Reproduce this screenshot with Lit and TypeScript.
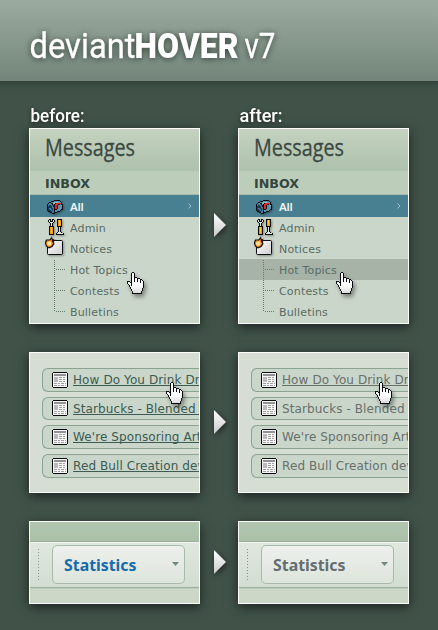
import { LitElement, html, svg, css } from "lit";
import { customElement, property } from "lit/decorators.js";
import { classMap } from "lit/directives/class-map.js";

const HAND = [
  ".....kk..........",
  "....kwwk.........",
  "....kwwk.........",
  "....kwwk.........",
  "....kwwk.........",
  "....kwwkkk.......",
  "....kwwkwwkkk....",
  "....kwwkwwkwwkk..",
  "....kwwkwwkwwkwk.",
  "kkk.kwwkwwkwwkwwk",
  "kwwkkwwwwwwwwkwwk",
  "kwwwkwwwwwwwwwwwk",
  ".kwwkwwwwwwwwwwwk",
  "..kwkwwwwwwwwwwwk",
  "..kwwwwwwwwwwwwwk",
  "...kwwwwwwwwwwwwk",
  "...kwwwwwwwwwwwk.",
  "....kwwwwwwwwwwk.",
  "....kwwwwwwwwwwk.",
  ".....kwwwwwwwwk..",
  ".....kwwwwwwwwk..",
  ".....kkkkkkkkkk..",
];

const TOOLS = [
  ".kk.kk...kkkkk..",
  "ksk.ksk..koyok..",
  "kskkksk..koyok..",
  ".ksssk...koyok..",
  "..ksk....koyok..",
  "..ksk....koyok..",
  "..ksk....koook..",
  ".kkkkk...kkkkk..",
  ".koyok....ksk...",
  ".koyok....ksk...",
  ".koyok....ksk...",
  ".koyok....ksk...",
  ".koyok....ksk...",
  ".koyok...ksssk..",
  ".koook..kssssssk",
  ".kkkkk..kkkkkkkk",
];

const MAILBOX = [
  ".......kkkkkk...",
  "....kkkttttttk..",
  "..kktttlllltttk.",
  ".kttkkllkrrrrrk.",
  "kbbbbktkrrrkktkk",
  "kbddbbkkrrktttlk",
  "kddddbkkrrkttttk",
  "kddddbbkrrkttttk",
  "kdbbddbkrrkttttk",
  "kddbbdbkkkttttkk",
  "kdddbdbktttttk..",
  ".kkddbbkttkkk...",
  "...kkbbkkk......",
  ".....kkk........",
];

const INKS: Record<string, string> = {
  k: "#090c10", w: "#ffffff", s: "#e4e6e1", o: "#f29a12", y: "#ffc62e",
  t: "#5f93a9", l: "#93bac6", b: "#427f9e", d: "#193a56", r: "#e8291e",
};

function pixels(map: string[]) {
  const runs: unknown[] = [];
  map.forEach((row, y) => {
    for (let x = 0; x < row.length; ) {
      const c = row[x];
      let n = 1;
      while (row[x + n] === c) n++;
      if (c !== ".") runs.push(svg`<rect x=${x} y=${y} width=${n} height="1" fill=${INKS[c]}></rect>`);
      x += n;
    }
  });
  return runs;
}

@customElement("hand-cursor")
class HandCursor extends LitElement {
  static styles = css`
    :host { display: block; width: 17px; height: 22px; }
    svg { display: block; overflow: visible; filter: drop-shadow(2px 3px 2px rgba(0, 0, 0, 0.4)); }
    .pix { shape-rendering: crispEdges; }
  `;
  render() {
    return html`<svg width="17" height="22">
      <defs><linearGradient id="shade" x1="0" y1="0" x2="0" y2="1">
        <stop offset=".3" stop-color="#999" stop-opacity="0"></stop>
        <stop offset="1" stop-color="#999" stop-opacity=".35"></stop>
      </linearGradient></defs>
      <g class="pix">${pixels(HAND)}</g>
      <path d="M5 10h11v6l-2 5h-8l-4-7z" fill="url(#shade)"></path>
    </svg>`;
  }
}

@customElement("messages-panel")
class MessagesPanel extends LitElement {
  @property({ type: Boolean }) hovered = false;
  static styles = css`
    :host { display: block; position: relative; height: 194px; background: #cbd6ca; font: 11px "DejaVu Sans", sans-serif; color: #576c64; }
    .head { height: 42px; background: linear-gradient(#c5d2c0, #adc1ac); }
    .head svg, .label svg { display: block; }
    .label { height: 24px; box-sizing: border-box; background: #bccdba; border-bottom: 1px solid #a7b9a7; }
    .label svg { height: 23px; }
    .row { height: 21px; line-height: 21px; display: flex; align-items: center; }
    .icon { width: 40px; height: 21px; flex: none; }
    .icon svg { display: block; overflow: visible; filter: drop-shadow(1px 1px 1px rgba(0, 0, 0, 0.35)); }
    .pix { shape-rendering: crispEdges; }
    .txt { flex: 1; padding-top: 2px; letter-spacing: 0.17px; }
    .all { height: 22px; background: #488092; color: #eef5f3; }
    .all .txt { font: 600 11.5px/20px "Noto Sans", sans-serif; letter-spacing: -0.2px; }
    .chev { margin-right: 7px; }
    .hot { background: #a7b3a7; }
    .branch { width: 40px; flex: none; height: 21px; }
    .branch svg { display: block; }
    hand-cursor { position: absolute; left: 97px; top: 143px; }
  `;
  render() {
    return html`
      <div class="head"><svg width="169" height="42">
        <text x="15" y="27" font-family="Open Sans" font-size="23.5" fill="#3b4842" stroke="#3b4842" stroke-width=".3" textLength="90" lengthAdjust="spacingAndGlyphs">Messages</text>
      </svg></div>
      <div class="label"><svg width="169" height="23">
        <text x="15" y="17" font-family="DejaVu Sans" font-weight="700" font-size="12.5" fill="#34463f" textLength="45" lengthAdjust="spacingAndGlyphs">INBOX</text>
      </svg></div>
      <div class="row all">
        <span class="icon"><svg width="40" height="21"><g class="pix" transform="translate(17 4)">${pixels(MAILBOX)}</g></svg></span>
        <span class="txt">All</span>
        <svg class="chev" width="4" height="6"><path d="M.5.5 3 3 .5 5.5" fill="none" stroke="#9cc0c8"></path></svg>
      </div>
      <div class="row">
        <span class="icon"><svg width="40" height="21"><g class="pix" transform="translate(18 2)">${pixels(TOOLS)}</g></svg></span>
        <span class="txt">Admin</span>
      </div>
      <div class="row">
        <span class="icon"><svg width="40" height="21">
          <defs><linearGradient id="paper" x1="0" y1="0" x2="1" y2="1"><stop stop-color="#fff"></stop><stop offset="1" stop-color="#cfcfcf"></stop></linearGradient></defs>
          <rect x="17.5" y="2.5" width="15" height="14" rx="1" fill="url(#paper)" stroke="#0c0f12"></rect>
          <path d="M16 1.500 19.500 1.500 22-1.500 22.500 1 24.500 1.500 24 4 24.500 6 22.500 9 19 10.500 16 8.500 14.800 5z" fill="#1b1108"></path>
          <path d="M17 2.500 20 2.500 21.800 1 22 3.500 23.200 5.500 21.500 8 19 9.300 16.800 7.700 16 5z" fill="#f58a18"></path>
          <circle cx="19.300" cy="5.500" r="2.200" fill="#ffe49c"></circle>
        </svg></span>
        <span class="txt">Notices</span>
      </div>
      ${["Hot Topics", "Contests", "Bulletins"].map((t, i) => html`
        <div class=${classMap({ row: true, hot: this.hovered && i === 0 })}>
          <span class="branch"><svg width="40" height="21">
            <path d=${`M24.500 ${i % 2 ? 0 : 1}V${i === 2 ? 11 : 21}M26 10.500h9`} stroke="#667b6f" stroke-dasharray="1 1" shape-rendering="crispEdges" fill="none"></path>
          </svg></span>
          <span class="txt">${t}</span>
        </div>`)}
      <hand-cursor></hand-cursor>`;
  }
}

@customElement("links-panel")
class LinksPanel extends LitElement {
  @property({ type: Boolean }) hovered = false;
  static styles = css`
    :host { display: block; position: relative; height: 139px; overflow: hidden; background: #d6ddd2; }
    .list { display: grid; grid-template-rows: 24px 23px 24px 24px; row-gap: 5px; padding: 15px 0 0 12px; }
    .item { display: flex; box-sizing: border-box; border: 1px solid #8ba391; border-right: 0; border-radius: 6px 0 0 6px; background: #cad6ca; padding: 3px 0 0 9px; gap: 5px; min-width: 0; }
    .item svg { flex: none; display: block; }
    .short { padding-top: 2px; }
    .short .txt { margin-top: 1px; }
    .txt { flex: 1; min-width: 0; box-sizing: border-box; height: 14px; font: 12px/17px "DejaVu Sans", sans-serif; letter-spacing: 0.1px; white-space: nowrap; color: #3c5b52; border-bottom: 1px solid #3c5b52; }
    .gray { color: #68706c; border-bottom-color: #68706c; }
    .plain { border-bottom-color: transparent; }
    hand-cursor { position: absolute; left: 136px; top: 29px; }
  `;
  render() {
    return html`<div class="list">
      ${["How Do You Drink Dr", "Starbucks - Blended", "We're Sponsoring Art", "Red Bull Creation dev"].map((t, i) => html`
        <div class=${classMap({ item: true, short: i === 1 })}>
          <svg width="16" height="16" shape-rendering="crispEdges">
            <path d="M1 0h14v1h1v14h-1v1H1v-1H0V1h1z" fill="#0b0d0c"></path>
            <path d="M1 1h14v14H1z" fill="#f6f6f6"></path>
            <path d="M2 2h12v2H2z" fill="#929292"></path>
            <path d="M2 5h4v5H2z" fill="#bababa"></path>
            <path d="M7 5.500h7M7 7.500h7M7 9.500h7M2 11.500h12M2 13.500h12" stroke="#a0a0a0" stroke-dasharray="3 1 2 1"></path>
          </svg>
          <span class=${classMap({ txt: true, gray: this.hovered, plain: this.hovered && i > 0 })}>${t}</span>
        </div>`)}
      </div>
      <hand-cursor></hand-cursor>`;
  }
}

@customElement("stats-panel")
class StatsPanel extends LitElement {
  @property({ type: Boolean }) hovered = false;
  static styles = css`
    :host { display: block; height: 81px; background: #ccd7c7; }
    .band { height: 19px; background: linear-gradient(#b1c6af, #abc0a7); border-bottom: 1px solid #9bae9c; }
    .bar { box-sizing: border-box; height: 46px; border-top: 1px solid #f2f5f0; border-bottom: 1px solid #9bae9c; background: linear-gradient(#e0e7df, #d2ddd1); display: flex; padding: 2px 0 0 8px; }
    .dots { width: 1px; height: 32px; margin: 4px 13px 0 0; flex: none; }
    .btn { box-sizing: border-box; width: 133px; height: 39px; border: 1px solid #a9b9aa; border-radius: 5px; background: linear-gradient(#edf0ec, #dde5dc); }
    .btn svg, .dots svg { display: block; }
    .under { height: 2px; background: linear-gradient(#c1cebc, #ccd7c7); }
  `;
  render() {
    return html`<div class="band"></div>
      <div class="bar">
        <div class="dots"><svg width="1" height="32"><path d="M.5 0v32" stroke="#82958a" stroke-dasharray="1 2" shape-rendering="crispEdges"></path></svg></div>
        <div class="btn"><svg width="131" height="37">
          <text x="11" y="25" font-family="Noto Sans" font-weight="700" font-size="16.5" fill=${this.hovered ? "#646d70" : "#176bab"} textLength="72.5" lengthAdjust="spacingAndGlyphs">Statistics</text>
          <path d="M119 16h7l-3.500 4z" fill="#718a7d"></path>
        </svg></div>
      </div>
      <div class="under"></div>`;
  }
}

@customElement("app-root")
class AppRoot extends LitElement {
  static styles = css`
    :host { display: block; width: 438px; height: 630px; overflow: hidden; background: #415349; }
    .top { height: 81px; background: linear-gradient(#9cab9f, #73857a); }
    .top svg, .caption svg, .arrow svg { display: block; overflow: visible; }
    .title { filter: drop-shadow(0 1px 3px rgba(20, 35, 28, 0.75)); }
    .main { box-sizing: border-box; height: 549px; padding-left: 29px; background: linear-gradient(#334139, #3d4e45 5px, transparent 14px); display: grid; grid-template-columns: 171px 38px 171px; grid-template-rows: 47px 196px 28px 141px 28px 83px; align-content: start; }
    .captions { grid-column: 1 / -1; display: grid; grid-template-columns: 209px 171px; }
    .caption svg { filter: drop-shadow(0 1px 2px rgba(0, 0, 0, 0.6)); }
    .frame { border: 1px solid #fbfcfa; box-shadow: 0 3px 11px rgba(0, 0, 0, 0.6); overflow: hidden; }
    .arrow { display: flex; align-items: center; padding: 0 0 2px 14px; }
    .arrow svg { filter: drop-shadow(1px 2px 3px rgba(0, 0, 0, 0.6)); }
    .gap { grid-column: 1 / -1; }
  `;
  private caption(t: string, w: number) {
    return html`<div class="caption"><svg width="170" height="47">
      <text x="1.500" y="41" font-family="Roboto" font-weight="500" font-size="18.5" fill="#fff" textLength=${w} lengthAdjust="spacingAndGlyphs">${t}</text>
    </svg></div>`;
  }
  private arrow() {
    return html`<div class="arrow"><svg width="12" height="24">
      <defs><linearGradient id="silver" x1="0" y1="0" x2="0" y2="1"><stop stop-color="#fff"></stop><stop offset="1" stop-color="#c9c9c9"></stop></linearGradient></defs>
      <path d="M0 0 12 12 0 24z" fill="url(#silver)"></path></svg></div>`;
  }
  render() {
    return html`
      <header class="top"><svg class="title" width="438" height="81" font-family="Roboto" fill="#fff">
        <text x="29.5" y="58" font-size="34.5" textLength="106" lengthAdjust="spacingAndGlyphs" stroke="#fff" stroke-width=".3">deviant</text>
        <text x="134.5" y="58" font-size="34.5" font-weight="900" textLength="104" lengthAdjust="spacingAndGlyphs">HOVER</text>
        <text x="244.5" y="58" font-size="34.5" textLength="31" lengthAdjust="spacingAndGlyphs" stroke="#fff" stroke-width=".3">v7</text>
      </svg></header>
      <main class="main">
        <div class="captions">${this.caption("before:", 54)}${this.caption("after:", 43)}</div>
        <div class="frame"><messages-panel></messages-panel></div>${this.arrow()}
        <div class="frame"><messages-panel hovered></messages-panel></div>
        <div class="gap"></div>
        <div class="frame"><links-panel></links-panel></div>${this.arrow()}
        <div class="frame"><links-panel hovered></links-panel></div>
        <div class="gap"></div>
        <div class="frame"><stats-panel></stats-panel></div>${this.arrow()}
        <div class="frame"><stats-panel hovered></stats-panel></div>
      </main>`;
  }
}
